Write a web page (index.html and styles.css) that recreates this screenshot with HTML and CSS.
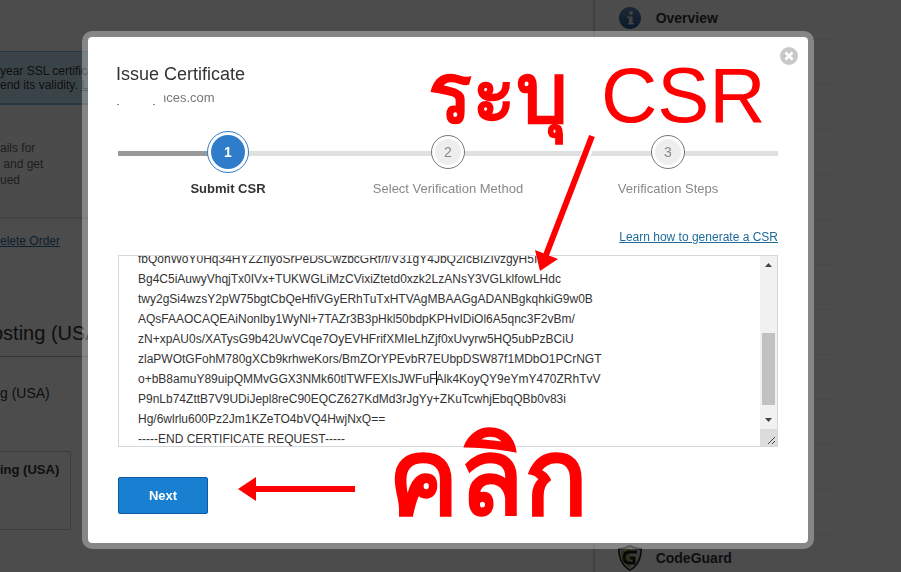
FILE: index.html
```html
<!DOCTYPE html>
<html lang="en">
<head>
  <meta charset="UTF-8" />
  <meta name="viewport" content="width=device-width, initial-scale=1.0"/>
  <title>Issue Certificate</title>
  <link rel="stylesheet" href="styles.css">
</head>
<body>

  <div class="page">
    <main class="content">
      <div class="alert">
        year SSL certificate<br>
        end its validity. <a href="#">Learn</a>
      </div>
      <div class="panel">
        ails for<br>
        &nbsp;and get<br>
        ued
      </div>
      <a class="delete-link" href="#">elete Order</a>
      <h2 class="section-title">osting (USA)</h2>
      <p class="plan">g (USA)</p>
      <div class="plan-box">ing (USA)</div>
    </main>

    <nav class="sidebar">
      <a class="side-item" href="#">
        <svg class="side-icon" viewBox="0 0 26 26">
          <defs>
            <linearGradient id="infoFill" x1="0" y1="0" x2="0" y2="1">
              <stop offset="0" stop-color="#6088b4"/>
              <stop offset="1" stop-color="#1d5896"/>
            </linearGradient>
          </defs>
          <circle cx="13" cy="13" r="11" fill="url(#infoFill)"/>
          <circle cx="14" cy="8" r="2" fill="#ddd"/>
          <path d="M10 11.500h5.500V18H17v1.500h-6V18h1v-5h-2z" fill="#ddd"/>
        </svg>
        Overview
      </a>
      <div class="side-item"></div>
      <div class="side-item"></div>
      <div class="side-item"></div>
      <div class="side-item"></div>
      <div class="side-item"></div>
      <div class="side-item"></div>
      <div class="side-item"></div>
      <div class="side-item"></div>
      <div class="side-item"></div>
      <div class="side-item"></div>
      <div class="side-item"></div>
      <a class="side-item" href="#">
        <svg class="side-icon" viewBox="0 0 26 26">
          <path d="M13 0c4 2 8 3 12 3 0 10-3 18-12 23C4 21 1 13 1 3c4 0 8-1 12-3z" fill="#1c1c1c"/>
          <path d="M13 2c4 2 7 2.500 10.500 2.500C23 13 20 20 13 24.500 6 20 3 13 2.500 4.500 6 4.500 9 4 13 2z" fill="#ccc"/>
          <path d="M13 3v20C7 19 4 13 4 6c3 0 6-1 9-3z" fill="#86a850"/>
          <path d="M20 7h-7c-4 0-6 2-6 5.500S9 18 13 18h4v-5h-4" fill="none" stroke="#1c1c1c" stroke-width="3"/>
        </svg>
        CodeGuard
      </a>
    </nav>
  </div>

  <div class="backdrop">
    <div class="modal" role="dialog" aria-labelledby="modalTitle">
      <button class="close" type="button" aria-label="Close">
        <svg viewBox="0 0 18 18">
          <circle cx="9" cy="9" r="9" fill="#c8c8c8"/>
          <path d="M5.500 5.500l7 7M12.500 5.500l-7 7" stroke="#fff" stroke-width="2.600"/>
        </svg>
      </button>

      <div class="modal-head">
        <h1 id="modalTitle">Issue Certificate</h1>
        <p class="domain">nces.com</p>
      </div>

      <ol class="steps">
        <li class="step active"><span class="dot"><span>1</span></span>Submit CSR</li>
        <li class="step"><span class="dot"><span>2</span></span>Select Verification Method</li>
        <li class="step"><span class="dot"><span>3</span></span>Verification Steps</li>
      </ol>

      <form class="csr-form" id="csrForm">
        <a class="help-link" href="#">Learn how to generate a CSR</a>
        <div class="csr-box">
          <textarea id="csr" aria-label="CSR" spellcheck="false">fbQohWoY0Hq34HYZZfIyoSrPeDsCwzbcGRf/f/V31gY4JbQ2IcBIZIvzgyH5I
Bg4C5iAuwyVhqjTx0IVx+TUKWGLiMzCVixiZtetd0xzk2LzANsY3VGLklfowLHdc
twy2gSi4wzsY2pW75bgtCbQeHfiVGyERhTuTxHTVAgMBAAGgADANBgkqhkiG9w0B
AQsFAAOCAQEAiNonlby1WyNl+7TAZr3B3pHkl50bdpKPHvIDiOl6A5qnc3F2vBm/
zN+xpAU0s/XATysG9b42UwVCqe7OyEVHFrifXMIeLhZjf0xUvyrw5HQ5ubPzBCiU
zlaPWOtGFohM780gXCb9krhweKors/BmZOrYPEvbR7EUbpDSW87f1MDbO1PCrNGT
o+bB8amuY89uipQMMvGGX3NMk60tlTWFEXIsJWFuFAlk4KoyQY9eYmY470ZRhTvV
P9nLb74ZttB7V9UDiJepl8reC90EQCZ627KdMd3rJgYy+ZKuTcwhjEbqQBb0v83i
Hg/6wlrlu600Pz2Jm1KZeTO4bVQ4HwjNxQ==
-----END CERTIFICATE REQUEST-----</textarea>
          <span class="caret"></span>
          <div class="scrollbar" aria-hidden="true">
            <svg class="scroll-arrow" viewBox="0 0 17 17"><path d="M5 11l3.500-4 3.500 4z" fill="#444"/></svg>
            <div class="scroll-track"><div class="scroll-thumb"></div></div>
            <svg class="scroll-arrow" viewBox="0 0 17 17"><path d="M5 6l3.500 4L12 6z" fill="#444"/></svg>
            <svg class="scroll-corner" viewBox="0 0 17 17"><path d="M8 15l7-7M12 15l3-3" stroke="#444"/></svg>
          </div>
        </div>
        <button class="next" type="submit">Next</button>
      </form>

      <span class="note note-thai" lang="th">ระบุ</span>
      <span class="note note-latin">CSR</span>
      <span class="note note-click" lang="th">คลิก</span>
      <svg class="arrow arrow-down" viewBox="0 0 66 146">
        <path d="M62 1L14 122" stroke="#fff" stroke-width="10"/>
        <path d="M60 3L14 122" stroke="#f00" stroke-width="6"/>
        <path d="M3 117l23 9-18 12z" fill="#f00"/>
      </svg>
      <svg class="arrow arrow-left" viewBox="0 0 118 24">
        <path d="M16 12h101" stroke="#f00" stroke-width="6"/>
        <path d="M0 12L18 0v24z" fill="#f00"/>
      </svg>
    </div>
  </div>

  <script src="script.js"></script>
</body>
</html>
```
FILE: script.js
```js
const csr = document.getElementById('csr');

csr.scrollTop = 157;

document.getElementById('csrForm').addEventListener('submit', function(e) {
  e.preventDefault();
});
```
FILE: styles.css
```css
* {
  box-sizing: border-box;
}

body {
  margin: 0;
  height: 100vh;
  overflow: hidden;
  font-family: "Liberation Sans", Arial, sans-serif;
  font-size: 12px;
  color: #333;
  background-color: #fff;
}

a {
  color: #1f6a9c;
}

/* page behind the dialog */
.page {
  display: flex;
}

.content {
  width: 66%;
  padding-top: 51px;
  border-right: 2px solid #d8d8d8;
}

.alert {
  padding: 12px 0 11px;
  line-height: 14px;
  background-color: #c4e4f2;
  border-top: 1px solid #84b8d8;
  border-bottom: 2px solid #84b8d8;
}

.panel {
  height: 114px;
  padding-top: 35px;
  line-height: 16px;
  color: #666;
  background-color: #fafafa;
  border-bottom: 2px solid #e0e0e0;
}

.delete-link {
  display: block;
  margin-top: 14px;
  line-height: 16px;
}

.section-title {
  margin: 70px 0 0 -8px;
  padding-bottom: 9px;
  font-size: 20px;
  line-height: 28px;
  font-weight: normal;
  border-bottom: 1px solid #bbb;
}

.plan {
  margin: 26px 0 0;
  font-size: 14px;
  line-height: 20px;
}

.plan-box {
  width: 71px;
  height: 79px;
  margin-top: 48px;
  padding-top: 10px;
  font-size: 13px;
  line-height: 16px;
  font-weight: bold;
  border: 1px solid #ccc;
  border-left: 0;
  border-radius: 0 3px 3px 0;
}

.sidebar {
  flex: 1;
  padding: 0 68px 0 22px;
  margin-top: -5px;
}

.side-item {
  display: flex;
  align-items: center;
  gap: 13px;
  height: 45px;
  padding-top: 2px;
  font-size: 14px;
  font-weight: bold;
  color: #333;
  text-decoration: none;
  border-bottom: 1px solid #f2f2f2;
}

.side-icon {
  width: 26px;
  height: 26px;
}

/* dialog */
.backdrop {
  position: fixed;
  inset: 0;
  display: flex;
  justify-content: center;
  align-items: flex-start;
  padding: 31px 5px 0 0;
  background-color: rgba(0, 0, 0, 0.7);
}

.modal {
  position: relative;
  width: 732px;
  padding: 24px 30px 29px;
  background-color: #fff;
  background-clip: padding-box;
  border: 6px solid rgba(255, 255, 255, 0.32);
  border-radius: 10px;
}

.close {
  position: absolute;
  top: 10px;
  right: 10px;
  width: 18px;
  height: 18px;
  padding: 0;
  background: none;
  border: none;
  cursor: pointer;
}

.close svg {
  display: block;
}

.modal-head {
  margin-left: -2px;
}

h1 {
  margin: 0;
  font-size: 18px;
  line-height: 26px;
  font-weight: normal;
}

.domain {
  position: relative;
  margin: 2px 0 0;
  padding-left: 43px;
  font-size: 13px;
  line-height: 18px;
  color: #777;
}

/* hides the first part of the domain name */
.domain::before {
  content: "";
  position: absolute;
  left: 0;
  top: 0;
  width: 48px;
  height: 18px;
  background:
    linear-gradient(#888, #888) 1px 15px / 2px 1px no-repeat,
    linear-gradient(#888, #888) 37px 15px / 2px 1px no-repeat,
    #fff;
}

.steps {
  display: flex;
  margin: 24px 0 0;
  padding: 0;
  list-style: none;
  background:
    linear-gradient(#999, #999) 0 20px / 110px 5px no-repeat,
    linear-gradient(#e0e0e0, #e0e0e0) 0 20px / 100% 5px no-repeat;
}

.step {
  flex: 1;
  display: flex;
  flex-direction: column;
  align-items: center;
  font-size: 13px;
  line-height: 18px;
  color: #888;
}

.dot {
  display: flex;
  width: 34px;
  height: 34px;
  margin: 4px 0 11px;
  padding: 3px;
  font-size: 14px;
  background-color: #fff;
  border: 1px solid #777;
  border-radius: 50%;
}

.dot span {
  flex: 1;
  display: flex;
  align-items: center;
  justify-content: center;
  background-color: #eee;
  border-radius: 50%;
}

.active {
  font-weight: bold;
  color: #333;
}

.active .dot {
  width: 42px;
  height: 42px;
  margin: 0 0 7px;
  border-color: #2f7dca;
}

.active .dot span {
  color: #fff;
  background-color: #2f7dca;
}

.csr-form {
  display: flex;
  flex-direction: column;
  align-items: flex-start;
  margin-top: 31px;
}

.help-link {
  align-self: flex-end;
  line-height: 16px;
}

.csr-box {
  position: relative;
  width: 100%;
  margin: 10px 0 30px;
}

textarea {
  display: block;
  width: 100%;
  height: 192px;
  padding: 150px 17px 17px 19px;
  font-family: inherit;
  font-size: 12px;
  line-height: 20px;
  color: #333;
  white-space: pre;
  overflow-x: hidden;
  overflow-y: auto;
  border: 1px solid #d5d8da;
  border-radius: 0;
  outline: none;
  resize: none;
  scrollbar-width: none;
}

.caret {
  position: absolute;
  left: 318px;
  top: 116px;
  width: 1px;
  height: 14px;
  background-color: #000;
}

.scrollbar {
  position: absolute;
  top: 1px;
  right: 1px;
  bottom: 1px;
  display: flex;
  flex-direction: column;
  width: 17px;
  background-color: #f1f1f1;
  pointer-events: none;
}

.scroll-arrow,
.scroll-corner {
  width: 17px;
  height: 17px;
}

.scroll-corner {
  background-color: #dcdcdc;
}

.scroll-track {
  flex: 1;
  display: flex;
  flex-direction: column;
  justify-content: flex-end;
  padding: 0 2px 7px;
}

.scroll-thumb {
  height: 72px;
  background-color: #c1c1c1;
}

.next {
  width: 90px;
  height: 37px;
  font-family: inherit;
  font-size: 13px;
  font-weight: bold;
  color: #fff;
  background-color: #197fd0;
  border: 1px solid #0f5aa8;
  border-radius: 2px;
  cursor: pointer;
}

/* red notes drawn over the dialog */
.note {
  position: absolute;
  color: #f00;
  line-height: 1;
  white-space: nowrap;
  text-shadow: 0 0 2px #fff;
  pointer-events: none;
}

.note-thai {
  left: 340px;
  top: 16px;
  font-size: 82px;
  font-weight: bold;
}

.note-latin {
  left: 513px;
  top: 19px;
  font-size: 78px;
}

.note-click {
  left: 300px;
  top: 387px;
  font-size: 106px;
  font-weight: bold;
}

.arrow {
  position: absolute;
  pointer-events: none;
}

.arrow-down {
  left: 444px;
  top: 96px;
  width: 66px;
  height: 146px;
}

.arrow-left {
  left: 150px;
  top: 440px;
  width: 118px;
  height: 24px;
}
```
